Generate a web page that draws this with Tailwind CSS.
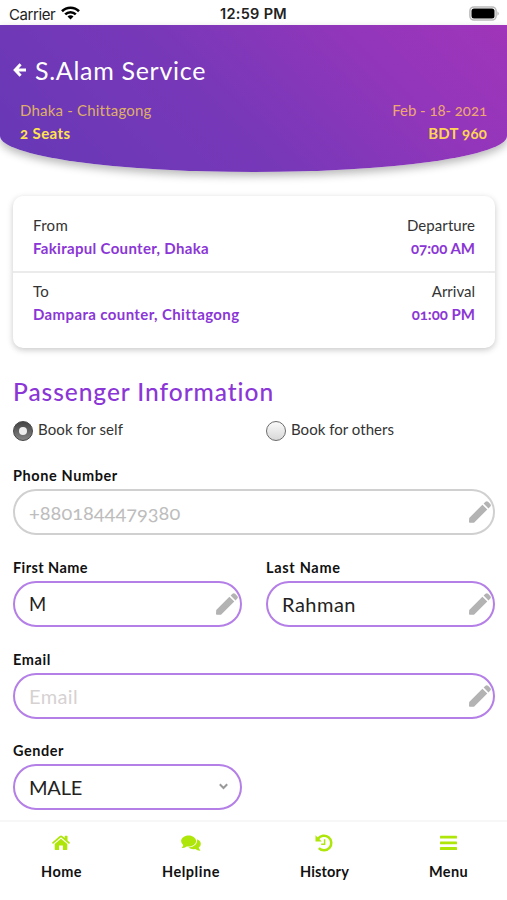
<!DOCTYPE html>
<html lang="en">
<head>
<meta charset="utf-8">
<title>S.Alam Service</title>
<script src="https://cdn.jsdelivr.net/npm/@tailwindcss/browser@4"></script>
</head>
<body class="flex h-[900px] w-[507px] flex-col overflow-hidden bg-white font-['Lato','Liberation_Sans',sans-serif] text-[15px] leading-[23px] text-[#333] oldstyle-nums">
<svg class="hidden">
  <symbol id="pencil" viewBox="0 0 22 22"><path fill="currentColor" d="M.2 17 13.400 3.700l4.900 4.900L5 21.700H.8q-.8 0-.8-.8zM14.600 2.500 16.500.700q1.300-1.100 2.600 0l2.200 2.200q1.200 1.300 0 2.600l-1.800 1.900z"/></symbol>
</svg>

<!-- status bar -->
<div class="grid h-[25px] shrink-0 grid-cols-3 items-center px-[9px] pt-[3px] font-['Inter','Liberation_Sans',sans-serif] leading-none text-[#222] lining-nums">
  <div class="flex items-center gap-[6px]">
    <span class="tracking-[-0.4px]">Carrier</span>
    <svg class="mb-[2px] h-[14px] w-[19px]" viewBox="0 0 19 14" fill="none" stroke="#000" stroke-width="2.600"><path d="M1 5.200a12.100 12.100 0 0 1 17 0"/><path d="M4.200 8.400a7.600 7.600 0 0 1 10.600 0"/><path d="M9.500 13.500 6.500 10.500a4.200 4.200 0 0 1 6 0z" fill="#000" stroke="none"/></svg>
  </div>
  <span class="text-center text-[14.5px] font-semibold tracking-[0.3px]">12:59 PM</span>
  <svg class="-mr-[2px] mb-[2px] h-[15px] w-[31px] justify-self-end" viewBox="0 0 31 15"><rect x=".9" y=".9" width="26.200" height="13.200" rx="4" fill="#fff" stroke="#bbb" stroke-width="1.500"/><rect x="2.500" y="2.500" width="23" height="10" rx="2.500" fill="#000"/><path d="M28.500 5.200q2.400 2.300 0 4.600z" fill="#aaa"/></svg>
</div>

<!-- header -->
<header class="h-[147px] shrink-0 rounded-b-[50%_36px] bg-linear-[45deg,#6638b6_0%,#7838b8_45%,#9236bb_75%,#a035b9_100%] shadow-[0_4px_8px_rgba(0,0,0,0.28)]">
  <div class="flex items-center gap-[9px] pt-[28px] pl-[13px] text-white">
    <svg class="h-[14px] w-[13px]" viewBox="0 0 13 14" fill="none" stroke="#fff" stroke-width="3"><path d="M7.600 1.300 2.200 7l5.400 5.700M2.400 7H13"/></svg>
    <h1 class="text-[25px] leading-[34px] tracking-[0.7px]">S.Alam Service</h1>
  </div>
  <div class="flex justify-between px-[20px] pt-[12px] text-[#dfaf6a]">
    <div>
      <p class="tracking-[0.2px]">Dhaka - Chittagong</p>
      <p class="font-bold tracking-[0.4px] text-[#ffe34f]">2 Seats</p>
    </div>
    <div class="text-right">
      <p class="tracking-[-0.05px] text-[#efa872]">Feb - 18- 2021</p>
      <p class="font-bold tracking-[0.2px] text-[#ffd455]">BDT 960</p>
    </div>
  </div>
</header>

<!-- trip card -->
<section class="mr-[12px] ml-[13px] mt-[24px] h-[152px] shrink-0 rounded-[10px] bg-white shadow-[0_2px_6px_rgba(0,0,0,0.22)]">
  <div class="flex h-[77px] justify-between border-b-2 border-[#ebebeb] px-[20px] pt-[18px]">
    <div>
      <p class="tracking-[0.3px]">From</p>
      <p class="font-bold tracking-[0.32px] text-[#8b36d6]">Fakirapul Counter, Dhaka</p>
    </div>
    <div class="text-right">
      <p class="tracking-[0.07px]">Departure</p>
      <p class="font-bold text-[#8b36d6]">07:00 AM</p>
    </div>
  </div>
  <div class="flex justify-between px-[20px] pt-[7px]">
    <div>
      <p class="tracking-[0.2px]">To</p>
      <p class="font-bold tracking-[0.38px] text-[#8b36d6]">Dampara counter, Chittagong</p>
    </div>
    <div class="text-right">
      <p>Arrival</p>
      <p class="font-bold text-[#8b36d6]">01:00 PM</p>
    </div>
  </div>
</section>

<!-- passenger form -->
<main class="min-h-0 flex-1 pt-[28px] pr-[12px] pl-[13px]">
  <h2 class="text-[24.5px] leading-[32px] font-medium tracking-[0.95px] text-[#8b36d6]">Passenger Information</h2>
  <div class="mt-[10px] grid grid-cols-2 gap-x-[24px]">
    <div class="flex gap-[5px]">
      <span class="mt-[3px] flex size-[20px] items-center justify-center rounded-full border border-[#444] bg-linear-to-b from-[#444] to-[#858585]"><span class="size-[8px] rounded-full bg-[#eee]"></span></span>
      <span class="tracking-[0.1px]">Book for self</span>
    </div>
    <div class="flex gap-[5px]">
      <span class="mt-[3px] size-[20px] rounded-full border-[1.5px] border-[#6c6c6c] bg-linear-to-b from-[#fafafa] to-[#d8d8d8]"></span>
      <span class="tracking-[0.03px]">Book for others</span>
    </div>
  </div>

  <div class="mt-[24px] text-[14.5px] leading-[22px] font-bold text-[#111]"><span class="tracking-[0.6px]">Phone Number</span></div>
  <div class="mt-[2px] flex h-[46px] items-center justify-between rounded-full border-2 border-[#d0d0d0] pr-[2px] pl-[14px] text-[20px] text-[#bdbdbd]">
    <span>+8801844479380</span>
    <svg class="size-[22px] text-[#b3b3b3]"><use href="#pencil"/></svg>
  </div>

  <div class="mt-[22px] grid grid-cols-2 gap-x-[24px]">
    <div>
      <div class="text-[14.5px] leading-[22px] font-bold text-[#111]"><span class="tracking-[0.42px]">First Name</span></div>
      <div class="mt-[2px] flex h-[46px] items-center justify-between rounded-full border-2 border-[#b47fe6] pr-[2px] pl-[14px] text-[20px] text-[#222]">
        <span class="text-[18.5px]">M</span>
        <svg class="size-[22px] text-[#b3b3b3]"><use href="#pencil"/></svg>
      </div>
    </div>
    <div>
      <div class="text-[14.5px] leading-[22px] font-bold text-[#111]"><span class="tracking-[0.7px]">Last Name</span></div>
      <div class="mt-[2px] flex h-[46px] items-center justify-between rounded-full border-2 border-[#b47fe6] pr-[2px] pl-[14px] text-[20px] text-[#222]">
        <span class="tracking-[0.5px]">Rahman</span>
        <svg class="size-[22px] text-[#b3b3b3]"><use href="#pencil"/></svg>
      </div>
    </div>
  </div>

  <div class="mt-[22px] text-[14.5px] leading-[22px] font-bold text-[#111]"><span class="tracking-[0.6px]">Email</span></div>
  <div class="mt-[2px] flex h-[46px] items-center justify-between rounded-full border-2 border-[#b47fe6] pr-[2px] pl-[14px] text-[20px] text-[#d6d2d2]">
    <span class="tracking-[0.4px]">Email</span>
    <svg class="size-[22px] text-[#b3b3b3]"><use href="#pencil"/></svg>
  </div>

  <div class="mt-[21px] w-[229px]">
    <div class="text-[14.5px] leading-[22px] font-bold text-[#111]"><span class="tracking-[0.54px]">Gender</span></div>
    <div class="mt-[2px] flex h-[46px] items-center justify-between rounded-full border-2 border-[#b47fe6] pr-[12px] pl-[14px] text-[20px] text-[#222]">
      <span class="tracking-[-0.2px]">MALE</span>
      <svg class="mb-[2px] h-[7px] w-[9px]" viewBox="0 0 9 7" fill="none" stroke="#999" stroke-width="2"><path d="M.8 1.300 4.500 5 8.200 1.300"/></svg>
    </div>
  </div>
</main>

<!-- tab bar -->
<nav class="flex h-[80px] shrink-0 justify-between border-t-2 border-[#f7f7f7] pt-[11px] pr-[39px] pl-[41px] text-[14.5px] leading-[22px] font-bold text-[#111]">
  <div class="flex flex-col items-center gap-[8px]">
    <svg class="h-[20px] w-[18px]" viewBox="0 0 18 20" fill="#aee60a"><path d="M9 5.800 15.300 11v5.300q0 .7-.7.700H10.900v-4.500H7.100V17H3.400q-.7 0-.7-.7V11z"/><path d="M9 2.600q.7 0 1.300.5l2.400 2V3.200q0-.4.4-.4h2q.4 0 .4.400v4.300l2.300 1.900q.3.300.1.600l-.6.700q-.3.300-.6 0L9 4.300l-7.700 6.400q-.3.300-.6 0L.1 10q-.2-.3.100-.6l7.500-6.300Q8.300 2.600 9 2.600z"/></svg>
    <span class="tracking-[0.45px]">Home</span>
  </div>
  <div class="flex flex-col items-center gap-[8px]">
    <svg class="h-[20px] w-[20px]" viewBox="0 0 20 20" fill="#aee60a"><path d="M7.600 2.500c4.200 0 7.500 2.500 7.500 5.500s-3.300 5.600-7.500 5.600q-1 0-1.900-.2Q3.600 15 1 15.100q-.6-.2-.2-.6 1.100-1 1.400-2.600Q.1 10.200.1 8c0-3 3.300-5.500 7.500-5.500z"/><path d="M16.300 6.300q3.500 1.600 3.500 4.600 0 2.100-2 3.700.3 1.600 1.400 2.500.4.500-.2.700-2.700-.2-4.700-1.800-4 .8-6.900-1.500 8.700-.4 8.900-8.200z"/></svg>
    <span class="tracking-[0.53px]">Helpline</span>
  </div>
  <div class="flex flex-col items-center gap-[8px]">
    <svg class="h-[20px] w-[18px]" viewBox="0 0 18 20" fill="none" stroke="#aee60a"><path d="M3 5.800a7.300 7.300 0 1 1 .8 9.300" stroke-width="2.500"/><path d="M.5 2.200v6.300h6.300z" fill="#aee60a" stroke="none"/><path d="M9.600 6.200v5H6.200" stroke-width="1.500"/></svg>
    <span class="tracking-[0.17px]">History</span>
  </div>
  <div class="flex flex-col items-center gap-[8px]">
    <svg class="h-[20px] w-[17px]" viewBox="0 0 17 20" fill="#aee60a"><rect y="2.700" width="17" height="2.900" rx=".6"/><rect y="8.400" width="17" height="2.900" rx=".6"/><rect y="14.100" width="17" height="2.900" rx=".6"/></svg>
    <span class="tracking-[0.36px]">Menu</span>
  </div>
</nav>
</body>
</html>
